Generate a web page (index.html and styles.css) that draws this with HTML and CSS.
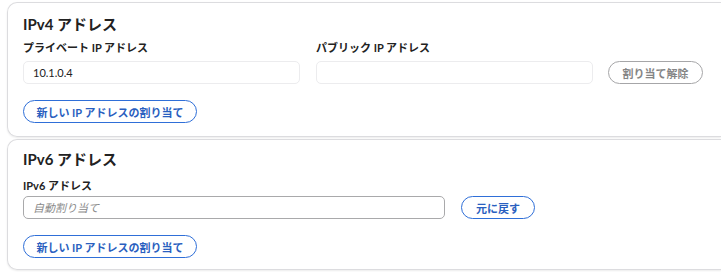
FILE: index.html
```html
<!DOCTYPE html>
<html lang="ja">
<head>
	<meta charset="UTF-8">
	<title>ネットワーク</title>
	<link rel="stylesheet" href="styles.css">
</head>
<body>
	<div class="page">
		<section class="card card_v4">
			<h2 class="title">IPv4 アドレス</h2>
			<div class="row">
				<div class="field">
					<label class="label">プライベート IP アドレス</label>
					<input class="input input_soft priv" type="text" value="10.1.0.4">
				</div>
				<div class="field">
					<label class="label">パブリック IP アドレス</label>
					<input class="input input_soft priv" type="text" value="">
				</div>
				<button class="btn btn_grey">割り当て解除</button>
			</div>
			<button class="btn btn_blue btn_new">新しい IP アドレスの割り当て</button>
		</section>
		<section class="card card_v6">
			<h2 class="title">IPv6 アドレス</h2>
			<div class="row">
				<div class="field">
					<label class="label">IPv6 アドレス</label>
					<input class="input v6" type="text" placeholder="自動割り当て">
				</div>
				<button class="btn btn_blue btn_back">元に戻す</button>
			</div>
			<button class="btn btn_blue btn_new">新しい IP アドレスの割り当て</button>
		</section>
	</div>
</body>
</html>
```
FILE: styles.css
```css
html,body{
	margin: 0;
	height: 100%;
	overflow: hidden;
	background: #fff;
}
body{
	font-family: "Lato", "Noto Sans CJK JP", sans-serif;
	color: #222;
}
.page{
	padding: 2px 0 0 7px;
	display: flex;
	flex-direction: column;
	gap: 2px;
}
/* カードは右端で切れているので右側の枠は描かない */
.card{
	border: 1px solid #dcdcdf;
	border-right: none;
	border-radius: 10px 0 0 10px;
	box-shadow: 0 1px 2px rgba(0,0,0,0.08);
	padding: 0 0 0 15px;
	box-sizing: border-box;
}
.card_v4{
	height: 135px;
	padding-top: 10px;
}
.card_v6{
	height: 131px;
	padding-top: 8px;
}
.title{
	margin: 0;
	font-size: 15px;
	line-height: 22px;
	font-weight: 700;
}
.row{
	display: flex;
	align-items: flex-end;
	gap: 16px;
	margin-top: 5px;
}
.field{
	display: flex;
	flex-direction: column;
}
.label{
	font-size: 11px;
	font-weight: 700;
	line-height: 16px;
	margin-bottom: 5px;
}
.card_v6 .label{
	margin-top: 3px;
	margin-bottom: 2px;
}
.input{
	height: 23px;
	box-sizing: border-box;
	padding: 0 9px;
	font-family: "Lato", "Noto Sans CJK JP", sans-serif;
	font-size: 11px;
	color: #222;
	border-radius: 5px;
	outline: none;
	margin: 0;
}
.input_soft{
	border: 1px solid #ececee;
	background: #fff;
}
.priv{
	width: 277px;
}
.v6{
	width: 422px;
	border: 1px solid #a9a9ab;
}
.v6::placeholder{
	color: #8a8a8a;
	font-style: italic;
}
.btn{
	height: 23px;
	box-sizing: border-box;
	border-radius: 12px;
	background: #fff;
	font-family: "Lato", "Noto Sans CJK JP", sans-serif;
	font-size: 11px;
	font-weight: 700;
	padding: 0;
	cursor: pointer;
}
.btn_grey{
	width: 95px;
	border: 1.5px solid #a6a6a8;
	color: #858585;
	margin-left: -1px;
}
.btn_blue{
	border: 1.5px solid #2f6fd8;
	color: #2a5fc0;
}
.btn_back{
	width: 74px;
}
.btn_new{
	width: 174px;
	display: block;
	margin-top: 16px;
}
```
